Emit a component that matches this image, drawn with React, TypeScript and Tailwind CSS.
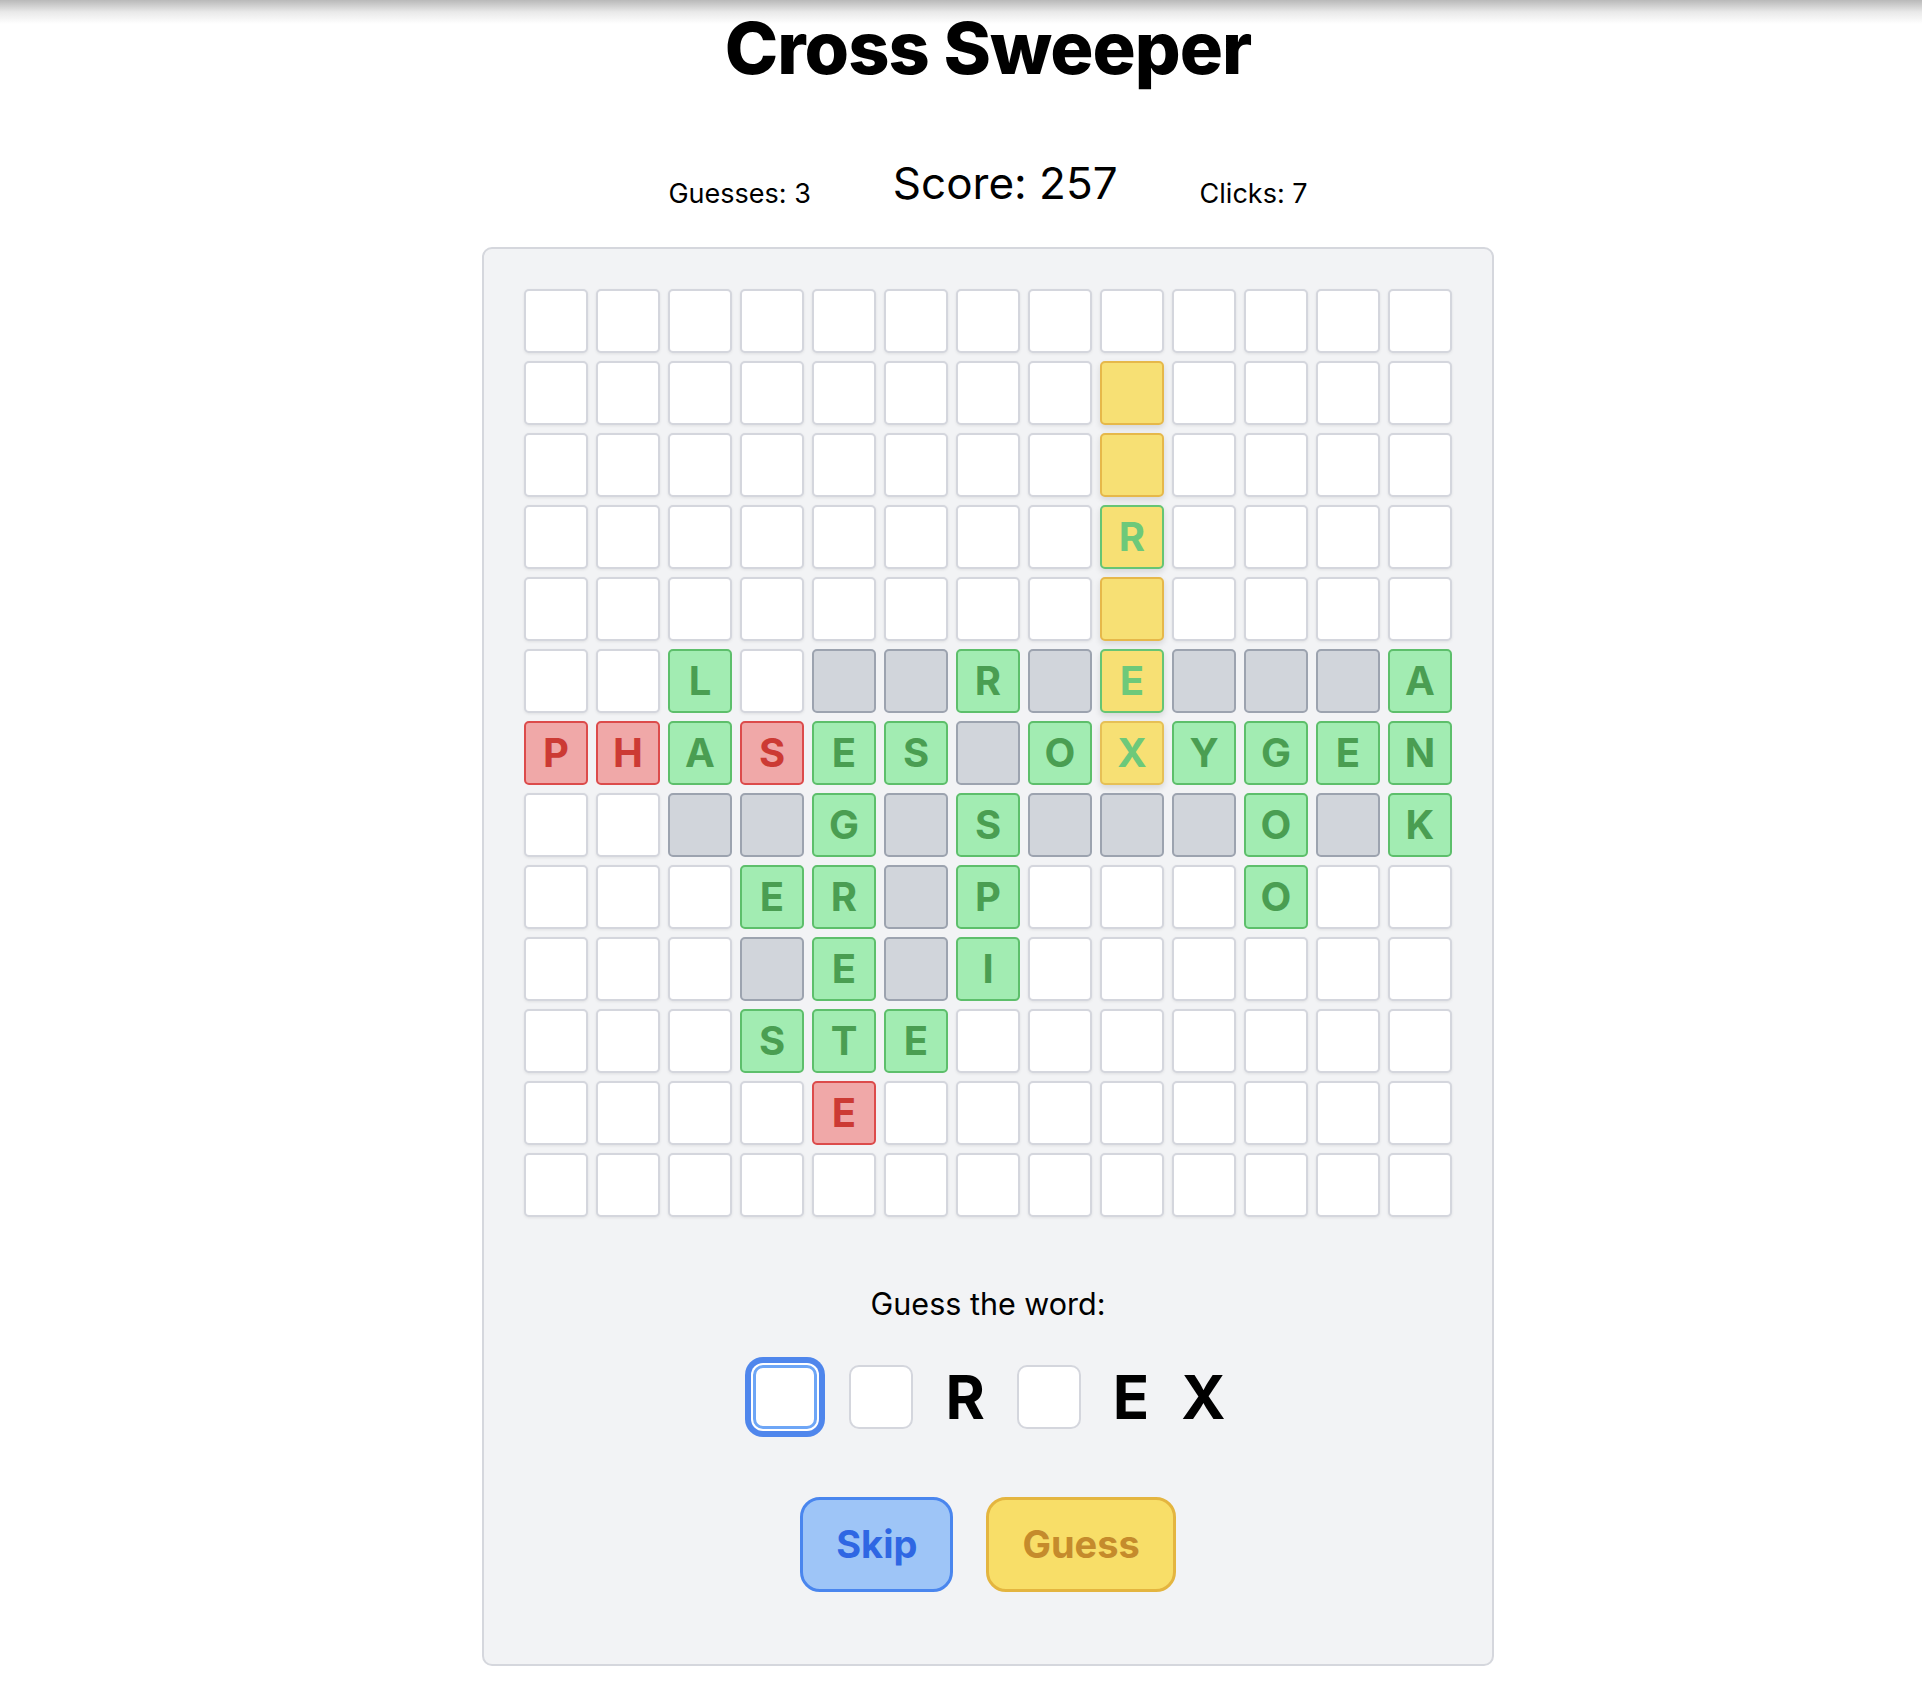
import React from "react";

type Cell = { t: string; l?: string };

const W: Cell = { t: "w" };
const X: Cell = { t: "x" };
const Y: Cell = { t: "y" };
const g = (l: string): Cell => ({ t: "g", l });
const r = (l: string): Cell => ({ t: "r", l });
const yg = (l: string): Cell => ({ t: "yg", l });
const yy = (l: string): Cell => ({ t: "yy", l });

const ws = (n: number): Cell[] => Array.from({ length: n }, () => W);

const grid: Cell[][] = [
  ws(13),
  [...ws(8), Y, ...ws(4)],
  [...ws(8), Y, ...ws(4)],
  [...ws(8), yg("R"), ...ws(4)],
  [...ws(8), Y, ...ws(4)],
  [W, W, g("L"), W, X, X, g("R"), X, yg("E"), X, X, X, g("A")],
  [r("P"), r("H"), g("A"), r("S"), g("E"), g("S"), X, g("O"), yy("X"), g("Y"), g("G"), g("E"), g("N")],
  [W, W, X, X, g("G"), X, g("S"), X, X, X, g("O"), X, g("K")],
  [W, W, W, g("E"), g("R"), X, g("P"), W, W, W, g("O"), W, W],
  [W, W, W, X, g("E"), X, g("I"), ...ws(6)],
  [W, W, W, g("S"), g("T"), g("E"), ...ws(7)],
  [...ws(4), r("E"), ...ws(8)],
  ws(13),
];

const cellClass: Record<string, string> = {
  w: "bg-white border-[#d4d6dd] shadow-[0_1px_3px_rgba(0,0,0,0.08)]",
  x: "bg-[#d1d5db] border-[#9ca3af]",
  y: "bg-[#f7e074] border-[#e6b84a] shadow-[0_3px_6px_rgba(0,0,0,0.12)]",
  g: "bg-[#a2ecb2] border-[#5dbf6b] text-[#4a9e52]",
  r: "bg-[#f0a8a8] border-[#dc4b4b] text-[#cc3a34]",
  yg: "bg-[#f7e074] border-[#66c574] text-[#6dc97a] shadow-[0_3px_6px_rgba(0,0,0,0.12)]",
  yy: "bg-[#f7e074] border-[#e6c056] text-[#6dc97a] shadow-[0_3px_6px_rgba(0,0,0,0.12)]",
};

export default function App() {
  return (
    <div
      className="relative min-h-screen bg-white pl-[54px] flex flex-col items-center text-black"
      style={{ fontFamily: "Inter, 'Noto Sans', sans-serif" }}
    >
      <div className="pointer-events-none absolute left-0 right-0 top-0 h-[24px] bg-gradient-to-b from-[#b9b9b9] via-[#e9e9e9] to-white" />
      <h1 className="relative mt-3 text-[72px] leading-none font-extrabold tracking-[-1px]">
        Cross Sweeper
      </h1>

      <div className="mt-[77px] flex items-end gap-[82px]">
        <div className="text-[27px] leading-[22px]">Guesses: 3</div>
        <div className="text-[44px] leading-[44px]">Score: 257</div>
        <div className="text-[27px] leading-[22px]">Clicks: 7</div>
      </div>

      <div className="mt-[42px] w-[1012px] rounded-[10px] border-2 border-[#d5d7dd] bg-[#f2f3f5] p-10 pb-[72px] flex flex-col items-center">
        <div className="grid grid-cols-[repeat(13,64px)] gap-2">
          {grid.flat().map((c, i) => (
            <div
              key={i}
              className={`h-16 w-16 rounded-[5px] border-2 flex items-center justify-center text-[40px] font-bold leading-none ${cellClass[c.t]}`}
            >
              {c.l ?? ""}
            </div>
          ))}
        </div>

        <div className="mt-[69px] text-[30.5px] leading-[36px]">Guess the word:</div>

        <div className="mt-[43px] ml-[3px] flex h-16 items-center gap-[32px] text-[60px] font-bold leading-none">
          <div className="h-16 w-16 rounded-[10px] border-[3px] border-[#6ea6f6] bg-white ring-[6px] ring-[#4f86ec] ring-offset-2 ring-offset-white" />
          <div className="h-16 w-16 rounded-[10px] border-2 border-[#d4d6dd] bg-white" />
          <span>R</span>
          <div className="h-16 w-16 rounded-[10px] border-2 border-[#d4d6dd] bg-white" />
          <span>E</span>
          <span>X</span>
        </div>

        <div className="mt-[68px] flex gap-[33px]">
          <button className="h-[95px] rounded-[20px] border-[3px] border-[#4a86ee] bg-[#9ec5f7] px-[33px] text-[38px] font-bold text-[#2f67e3]">
            Skip
          </button>
          <button className="h-[95px] rounded-[20px] border-[3px] border-[#e4b53f] bg-[#f8de68] px-[33px] text-[38px] font-bold text-[#c58b2c]">
            Guess
          </button>
        </div>
      </div>
    </div>
  );
}
